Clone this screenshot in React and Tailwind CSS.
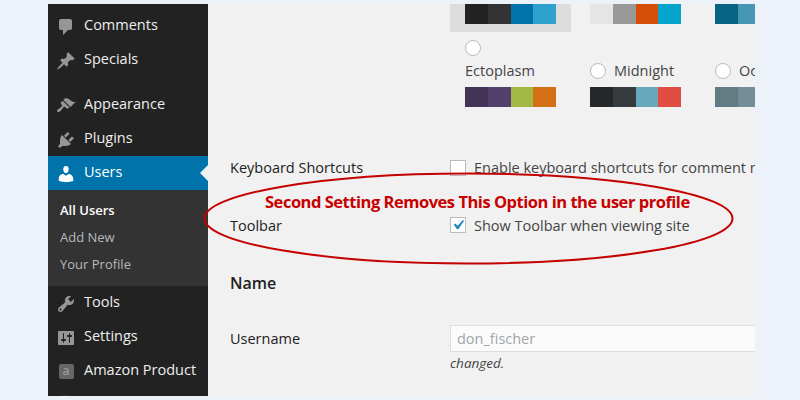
const ICONS = {
  comments: "M5 2h9c1.1 0 2 .9 2 2v7c0 1.1-.9 2-2 2h-2l-5 5v-5H5c-1.1 0-2-.9-2-2V4c0-1.1.9-2 2-2z",
  pin: "M10.44 3.02l1.82-1.82 6.36 6.35-1.83 1.82c-1.05-.68-2.48-.57-3.41.36l-.75.75c-.92.93-1.04 2.35-.35 3.41l-1.83 1.82-2.41-2.41-2.8 2.79c-.42.42-3.38 2.71-3.8 2.29s1.86-3.39 2.28-3.81l2.79-2.79L4.1 9.36l1.83-1.82c1.05.69 2.48.57 3.4-.36l.75-.75c.93-.92 1.05-2.35.36-3.41z",
  brush: "M14.48 11.06L7.41 3.99l1.5-1.5c.5-.56 2.3-.47 3.51.32 1.21.8 1.43 1.28 2.91 2.1 1.18.64 2.45 1.26 4.45.85zm-.71.71L6.7 4.7 4.93 6.47c-.39.39-.39 1.02 0 1.41l1.06 1.06c.39.39.39 1.03 0 1.42-.6.6-1.43 1.11-2.21 1.69-.35.26-.7.53-1.01.84C1.43 13.23.4 14.75 1.37 15.72c.98.98 2.49-.05 3.84-1.4.31-.31.58-.66.85-1.02.57-.78 1.08-1.61 1.69-2.21.39-.39 1.02-.39 1.41 0l1.06 1.06c.39.39 1.02.39 1.41 0z",
  plug: "M13.11 4.36L9.87 7.6 8 5.73l3.24-3.24c.35-.34 1.05-.2 1.56.32.52.51.66 1.21.31 1.55zm-8 1.77l.91-1.12 9.01 9.01-1.19.84c-.71.71-2.63 1.16-3.82 1.16H6.14L4.9 17.26c-.59.59-1.54.59-2.12 0-.59-.58-.59-1.53 0-2.12l1.24-1.24v-3.88c0-1.13.4-3.19 1.09-3.89zm7.26 3.97l3.24-3.24c.34-.35 1.04-.21 1.55.31.52.51.66 1.21.31 1.55l-3.24 3.25z",
  user: "M10 9.25c-2.27 0-2.73-3.44-2.73-3.44C7 4.02 7.82 2 9.97 2c2.16 0 2.98 2.02 2.71 3.81 0 0-.41 3.44-2.68 3.44zm0 2.57L12.72 10c2.39 0 4.52 2.33 4.52 4.53v2.49s-3.65 1.13-7.24 1.13c-3.65 0-7.24-1.13-7.24-1.13v-2.49c0-2.25 1.94-4.48 4.47-4.48z",
  wrench: "M16.68 9.77c-1.34 1.34-3.3 1.67-4.95.99l-5.41 6.52c-.99.99-2.59.99-3.58 0s-.99-2.59 0-3.57l6.52-5.42c-.68-1.65-.35-3.61.99-4.95 1.28-1.28 3.12-1.62 4.72-1.06l-2.89 2.89 2.82 2.82 2.86-2.87c.53 1.58.18 3.39-1.08 4.65zM3.81 16.21c.4.39 1.04.39 1.43 0 .4-.4.4-1.04 0-1.43-.39-.4-1.03-.4-1.43 0-.39.39-.39 1.03 0 1.43z",
  sliders: "M18 16V4c0-.55-.45-1-1-1H3c-.55 0-1 .45-1 1v12c0 .55.45 1 1 1h14c.55 0 1-.45 1-1zM8 11h1c.55 0 1 .45 1 1s-.45 1-1 1H8v1.5c0 .28-.22.5-.5.5s-.5-.22-.5-.5V13H6c-.55 0-1-.45-1-1s.45-1 1-1h1V5.5c0-.28.22-.5.5-.5s.5.22.5.5V11zm5-2h-1c-.55 0-1-.45-1-1s.45-1 1-1h1V5.5c0-.28.22-.5.5-.5s.5.22.5.5V7h1c.55 0 1 .45 1 1s-.45 1-1 1h-1v5.5c0 .28-.22.5-.5.5s-.5-.22-.5-.5V9z",
};

function MenuIcon({ name, active }) {
  return (
    <svg viewBox="0 0 20 20" className={`w-[20px] h-[20px] mt-[1px] ${active ? "fill-white" : "fill-[#969696]"}`}>
      <path d={ICONS[name]} />
    </svg>
  );
}

function AmazonIcon() {
  return (
    <div className="w-[15px] h-[15px] mt-[1px] rounded-[2px] bg-[#666666] flex items-center justify-center text-[#9a9a9a] text-[12px] font-semibold leading-none pb-[2px]">
      a
    </div>
  );
}

function MenuItem({ icon, label, active }) {
  return (
    <div className={`relative h-[34px] flex items-center pl-[8px] ${active ? "bg-[#0073aa] text-white" : "text-[#eeeeee]"}`}>
      <div className="w-[20px] flex justify-center">
        {icon === "amazon" ? <AmazonIcon /> : <MenuIcon name={icon} active={active} />}
      </div>
      <span className="ml-[8px] pb-[2px] text-[14.5px]">{label}</span>
      {active && (
        <div className="absolute right-0 top-[9px] w-0 h-0 border-y-[8px] border-y-transparent border-r-[8px] border-r-[#f1f1f1]" />
      )}
    </div>
  );
}

function Swatches({ colors }) {
  return (
    <div className="flex h-[20px]">
      {colors.map((c) => (
        <div key={c} className="flex-1" style={{ backgroundColor: c }} />
      ))}
    </div>
  );
}

function Radio() {
  return <div className="w-[16px] h-[16px] shrink-0 rounded-full bg-white border-[1.5px] border-[#bbbbbb]" />;
}

function Checkbox({ checked }) {
  return (
    <div className="w-[16px] h-[16px] shrink-0 bg-white border border-[#bbbbbb] flex items-center justify-center overflow-hidden">
      {checked && (
        <svg viewBox="0 0 20 20" className="w-[20px] h-[20px] shrink-0 fill-[#1e8cbe]">
          <path d="M14.83 4.89l1.34.94-5.81 8.38H9.02L5.78 9.67l1.34-1.25 2.57 2.4z" />
        </svg>
      )}
    </div>
  );
}

export default function App() {
  return (
    <div className="relative w-[800px] h-[400px] overflow-hidden bg-[#edf1fa] pl-[48px] py-[4px] font-['Open_Sans',sans-serif]">
      <div className="flex w-[707px] h-[392px] overflow-hidden bg-[#f1f1f1]">
        {/* admin menu */}
        <div className="w-[160px] shrink-0 bg-[#222222] pt-[5px] overflow-hidden">
          <MenuItem icon="comments" label="Comments" />
          <MenuItem icon="pin" label="Specials" />
          <div className="h-[11px]" />
          <MenuItem icon="brush" label="Appearance" />
          <MenuItem icon="plug" label="Plugins" />
          <MenuItem icon="user" label="Users" active />
          <div className="bg-[#333333] h-[96px] pt-[7px] pl-[12px] text-[13px] text-[#b4b9be]">
            <div className="h-[27px] flex items-center font-semibold text-white">All Users</div>
            <div className="h-[27px] flex items-center">Add New</div>
            <div className="h-[27px] flex items-center">Your Profile</div>
          </div>
          <MenuItem icon="wrench" label="Tools" />
          <MenuItem icon="sliders" label="Settings" />
          <MenuItem icon="amazon" label="Amazon Product" />
          <div className="mt-[7px] ml-[9px] w-[16px] h-[16px] rounded-full bg-[#3a3a3a]" />
        </div>

        {/* profile form */}
        <div className="flex-1 min-w-0 pl-[22px] text-[14.5px] text-[#444444]">
          <div className="pl-[220px] w-[560px]">
            <div className="grid grid-cols-[121px_121px_121px] gap-x-[4px]">
              <div className="h-[28px] px-[15px] bg-[#dddddd]">
                <Swatches colors={["#222222", "#333333", "#0073aa", "#2ea2cc"]} />
              </div>
              <div className="h-[28px] px-[15px]">
                <Swatches colors={["#e5e5e5", "#999999", "#d64e07", "#04a4cc"]} />
              </div>
              <div className="h-[28px] px-[15px]">
                <Swatches colors={["#096484", "#4796b3", "#52accc", "#74b6ce"]} />
              </div>
              <div className="h-[75px] px-[15px] flex flex-col justify-end">
                <Radio />
                <div className="h-[22px] mt-[4px] mb-[5px] leading-[22px]">Ectoplasm</div>
                <Swatches colors={["#413256", "#523f6d", "#a3b745", "#d46f15"]} />
              </div>
              <div className="h-[75px] px-[15px] flex flex-col justify-end">
                <div className="h-[22px] mb-[5px] flex items-center gap-[8px] whitespace-nowrap">
                  <Radio />
                  <span className="pb-[1px]">Midnight</span>
                </div>
                <Swatches colors={["#25282b", "#363b3f", "#69a8bb", "#e14d43"]} />
              </div>
              <div className="h-[75px] px-[15px] flex flex-col justify-end">
                <div className="h-[22px] mb-[5px] flex items-center gap-[8px] whitespace-nowrap">
                  <Radio />
                  <span className="pb-[1px]">Ocean</span>
                </div>
                <Swatches colors={["#627c83", "#738e96", "#9ebaa0", "#aa9d88"]} />
              </div>
            </div>
          </div>

          <div className="flex items-center h-[20px] mt-[51px]">
            <div className="w-[220px] shrink-0 text-[#222222] font-medium">Keyboard Shortcuts</div>
            <Checkbox />
            <span className="ml-[8px] whitespace-nowrap">Enable keyboard shortcuts for comment moderation.</span>
          </div>

          <div className="flex items-center h-[20px] mt-[37px]">
            <div className="w-[220px] shrink-0 pt-[2px] text-[#222222] font-medium">Toolbar</div>
            <Checkbox checked />
            <span className="ml-[8px] pt-[2px] whitespace-nowrap">Show Toolbar when viewing site</span>
          </div>

          <div className="mt-[36px] h-[24px] leading-[24px] text-[16px] font-semibold text-[#222222]">Name</div>

          <div className="flex items-center h-[27px] mt-[30px]">
            <div className="w-[220px] shrink-0 text-[#222222] font-medium">Username</div>
            <div className="flex-1 h-[27px] px-[6px] flex items-center bg-[#fbfbfb] border border-r-0 border-[#dddddd] text-[#a0a5aa]">
              don_fischer
            </div>
          </div>
          <div className="ml-[220px] mt-[1px] text-[13.5px] italic">changed.</div>
        </div>
      </div>

      {/* annotation drawn over the form */}
      <svg className="absolute left-0 top-0 pointer-events-none" width="800" height="400">
        <ellipse cx="468.5" cy="218.5" rx="264" ry="45" fill="none" stroke="#c40000" strokeWidth="2" />
      </svg>
      <div className="absolute left-[265px] top-[190px] text-[16.5px] leading-[24px] font-bold tracking-[-0.48px] whitespace-nowrap text-[#c80000]">
        Second Setting Removes This Option in the user profile
      </div>
    </div>
  );
}
